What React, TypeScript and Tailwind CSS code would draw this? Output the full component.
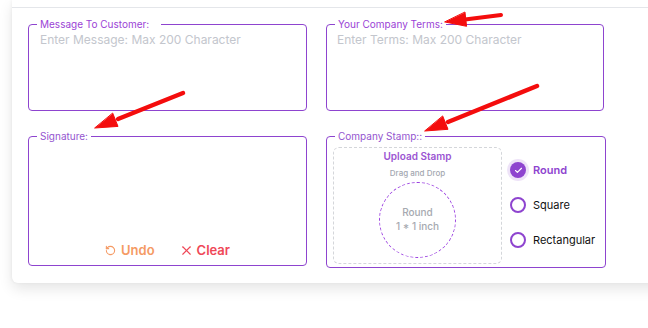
import React from "react";
import { RotateCcw, X, Check } from "lucide-react";

const legendCls =
  "ml-[8px] px-[3px] text-[10px] leading-[12px] font-normal text-[#9b43d6]";

function Arrows() {
  return (
    <svg
      className="absolute left-0 top-0 pointer-events-none"
      width={648}
      height={328}
      viewBox="0 0 648 328"
    >
      <g fill="#f40d0d" stroke="#f40d0d" strokeLinecap="round">
        <line x1={501} y1={15} x2={465} y2={19.5} strokeWidth={4} />
        <polygon points="445,22 466.6,26.3 465.0,12.4" strokeWidth={1} strokeLinejoin="round" />
        <line x1={183} y1={93} x2={118} y2={119} strokeWidth={4.5} />
        <polygon points="95,128 118.0,126.4 112.8,113.4" strokeWidth={1} strokeLinejoin="round" />
        <line x1={537} y1={86} x2={448} y2={122} strokeWidth={4.5} />
        <polygon points="425,131 448.0,129.3 442.8,116.3" strokeWidth={1} strokeLinejoin="round" />
      </g>
    </svg>
  );
}

function Radio({ label, checked }: { label: string; checked?: boolean }) {
  return (
    <div className="flex h-[16px] items-center">
      {checked ? (
        <span className="flex h-[16px] w-[16px] items-center justify-center rounded-full bg-[#8e44cf] shadow-[0_0_0_3px_rgba(142,68,207,0.15)]">
          <Check size={9} color="#ffffff" strokeWidth={3} />
        </span>
      ) : (
        <span className="h-[16px] w-[16px] rounded-full border-[2px] border-[#8e44cf] bg-white" />
      )}
      <span
        className={
          "ml-[7px] text-[11px] leading-[14px] " +
          (checked ? "font-semibold text-[#8e44cf]" : "font-normal text-[#111111]")
        }
      >
        {label}
      </span>
    </div>
  );
}

export default function App() {
  return (
    <div
      className="relative h-[328px] w-[648px] overflow-hidden bg-white"
      style={{ fontFamily: "Inter, 'Noto Sans', sans-serif" }}
    >
      <div className="ml-[12px] w-[660px] rounded-bl-[6px] bg-white shadow-[0_6px_14px_rgba(0,0,0,0.10),-1px_0_3px_rgba(0,0,0,0.04)]">
        <div className="h-[8px] border-b-[1.5px] border-[#e4e6ea]" />
        <div className="grid grid-cols-[279px_280px] gap-x-[19px] gap-y-[19px] items-start pl-[16px] pt-[10px] pb-[15px]">
          {/* Message */}
          <fieldset className="h-[93px] w-[279px] rounded-[4px] border border-[#8e44cf]">
            <legend className={legendCls + " pr-[12px]"}>Message To Customer:</legend>
            <textarea
              className="block h-[80px] w-full resize-none bg-transparent px-[11px] pt-[2px] text-[12px] leading-[16px] text-[#374151] outline-none placeholder:text-[#c3c6cd]"
              placeholder="Enter Message: Max 200 Character"
            />
          </fieldset>
          {/* Terms */}
          <fieldset className="h-[93px] w-[278px] rounded-[4px] border border-[#8e44cf]">
            <legend className={legendCls}>Your Company Terms:</legend>
            <textarea
              className="block h-[80px] w-full resize-none bg-transparent px-[10px] pt-[2px] text-[12px] leading-[16px] text-[#374151] outline-none placeholder:text-[#c3c6cd]"
              placeholder="Enter Terms: Max 200 Character"
            />
          </fieldset>
          {/* Signature */}
          <fieldset className="h-[136px] w-[279px] rounded-[4px] border border-[#8e44cf]">
            <legend className={legendCls + " text-[#9455cf]"}>Signature:</legend>
            <div className="flex h-[123px] items-end justify-center gap-[24px] pb-[7px]">
              <button className="flex items-center gap-[5px] text-[13px] font-semibold leading-[16px] text-[#f59a64]">
                <RotateCcw size={11} strokeWidth={2.4} color="#f59a64" />
                Undo
              </button>
              <button className="flex items-center gap-[3px] text-[13px] font-semibold leading-[16px] text-[#ef4757]">
                <X size={15} strokeWidth={1.8} color="#ef4757" />
                Clear
              </button>
            </div>
          </fieldset>
          {/* Stamp */}
          <fieldset className="h-[138px] w-[280px] rounded-[4px] border border-[#8e44cf]">
            <legend className={legendCls + " text-[#9455cf]"}>Company Stamp::</legend>
            <div className="flex pl-[6px] pt-[5px]">
              <div className="flex h-[117px] w-[169px] flex-col items-center rounded-[6px] border border-dashed border-[#d4d6da] pt-[2px]">
                <div className="text-[10px] font-semibold leading-[12px] text-[#9b55d2]">
                  Upload Stamp
                </div>
                <div className="mt-[6px] text-[8px] font-medium leading-[10px] text-[#a3a7b0]">
                  Drag and Drop
                </div>
                <div className="mt-[4px] flex h-[76px] w-[77px] flex-col items-center justify-center rounded-full border border-dashed border-[#9a3fe0] pb-[2px]">
                  <div className="text-[10px] font-medium leading-[14px] text-[#a6a9b0]">Round</div>
                  <div className="text-[10px] font-medium leading-[14px] text-[#a6a9b0]">1 * 1 inch</div>
                </div>
              </div>
              <div className="ml-[8px] flex flex-col gap-[19px] pt-[15px]">
                <Radio label="Round" checked />
                <Radio label="Square" />
                <Radio label="Rectangular" />
              </div>
            </div>
          </fieldset>
        </div>
      </div>
      <Arrows />
    </div>
  );
}
